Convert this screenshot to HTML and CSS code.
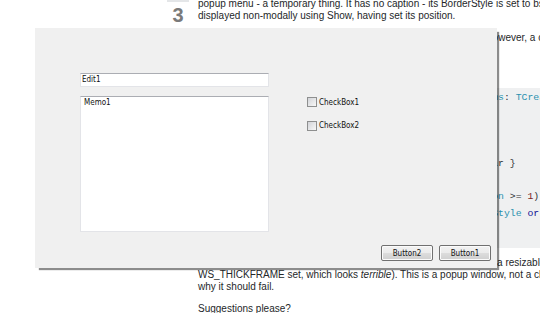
FILE: index.html
```html
<!DOCTYPE html>
<html lang="en">
<head>
    <meta charset="UTF-8">
    <title>Resizable popup form</title>
    <link rel="stylesheet" href="styles.css">
</head>
<body>
    <div class="question">
        <div class="votecell">
            <div class="vote-arrow"></div>
            <div class="vote-count">3</div>
        </div>
        <div class="postcell">
            <p>popup menu - a temporary thing. It has no caption - its BorderStyle is set to bsNone, and it is always
               displayed non-modally using Show, having set its position.</p>
            <p>I want the user to be able to resize it easily by dragging its edge. However, a caption bar then appears,
               which I don't want.</p>
            <p>Here is what I have tried:</p>
            <pre class="code"><span class="kwd">procedure</span> <span class="typ">TfrmPopupMenuForm</span>.<span class="typ">CreateParams</span>(<span class="kwd">var</span> <span class="typ">Params</span>: <span class="typ">TCreateParams</span>);
<span class="kwd">begin</span>
  <span class="kwd">inherited</span> <span class="typ">CreateParams</span>(<span class="typ">Params</span>);
  <span class="typ">Params</span>.<span class="typ">Style</span> := WS_POPUP <span class="kwd">or</span> WS_BORDER;
  { Tried this too, but it still adds a caption bar }
  <span class="com">// Params.Style := WS_SIZEBOX;</span>
  <span class="kwd">if</span> <span class="typ">Assigned</span>(<span class="typ">FOwnerControl</span>) <span class="kwd">and</span> (<span class="typ">Win32MajorVersion</span> &gt;= <span class="lit">1</span>) <span class="kwd">then</span>
   <span class="typ">Params</span>.<span class="typ">Style</span> := WS_OVERLAPPEDWINDOW <span class="kwd">or</span> <span class="typ">Params</span>.<span class="typ">Style</span> <span class="kwd">or</span> WS_THICKFRAME;
<span class="kwd">end</span>;</pre>
            <p>I had expected that setting the window style like this would give me a resizable window (with
               WS_THICKFRAME set, which looks <em>terrible</em>). This is a popup window, not a child window, so I can't see
               why it should fail.</p>
            <p>Suggestions please?</p>
        </div>
    </div>

    <div class="popup">
        <div class="form-body">
            <div class="form-fields">
                <div class="edit">Edit1</div>
                <div class="memo">Memo1</div>
            </div>
            <div class="form-checks">
                <label class="check"><span class="check-box"></span>CheckBox1</label>
                <label class="check"><span class="check-box"></span>CheckBox2</label>
            </div>
        </div>
        <div class="form-buttons">
            <button class="button">Button2</button>
            <button class="button">Button1</button>
        </div>
    </div>
</body>
</html>
```

FILE: styles.css
```css
html, body {
    margin: 0;
    overflow: hidden;
}

body {
    position: relative;
    width: 540px;
    height: 313px;
    background: #fff;
    font-family: "Liberation Sans", Arial, sans-serif;
    font-size: 10px;
    color: #242729;
}

.question {
    display: flex;
    padding-left: 168px;
    margin-top: -2px;
}

.votecell {
    width: 20px;
    margin-right: 10px;
    display: flex;
    flex-direction: column;
    align-items: center;
}

.vote-arrow {
    width: 22px;
    height: 4px;
    background: #e4e6e8;
}

.vote-count {
    margin-top: 3px;
    font-size: 20px;
    font-weight: bold;
    line-height: 20px;
    color: #7a7a7a;
}

.postcell {
    width: 470px;
    flex-shrink: 0;
}

.postcell p {
    margin: 0 0 10px;
    line-height: 12px;
}

.code {
    margin: 0 0 9px;
    padding: 2px 6px 9px;
    background: #eff0f1;
    font-family: "Liberation Mono", "Courier New", monospace;
    font-size: 9.8px;
    line-height: 16.5px;
    color: #303336;
    overflow: hidden;
}

.kwd { color: #101094; }
.typ { color: #2b91af; }
.lit { color: #7d2727; }
.com { color: #858c93; }

/* the popup form lying over the question */
.popup {
    position: absolute;
    left: 35px;
    top: 28px;
    width: 462px;
    height: 240px;
    box-sizing: border-box;
    padding: 45px 6px 7px 45px;
    display: flex;
    flex-direction: column;
    background: #f0f0f0;
    box-shadow: 3px 3px 1px -1px rgba(0,0,0,0.45);
    font-family: "DejaVu Sans Condensed", "DejaVu Sans", sans-serif;
    font-stretch: condensed;
    font-size: 8px;
    color: #111;
}

.form-body {
    display: flex;
}

.form-fields {
    width: 189px;
    display: flex;
    flex-direction: column;
    gap: 9px;
}

.edit,
.memo {
    box-sizing: border-box;
    background: #fff;
    border: 1px solid #e3e4e8;
    border-top-color: #abadb3;
    line-height: 12px;
}

.edit {
    height: 14px;
    padding: 0 1px;
}

.memo {
    height: 136px;
    padding: 0 3px;
}

.form-checks {
    margin-left: 38px;
    padding-top: 24px;
    display: flex;
    flex-direction: column;
    gap: 13.5px;
}

.check {
    display: flex;
    align-items: center;
    gap: 2px;
    height: 10px;
}

.check-box {
    width: 10px;
    height: 10px;
    box-sizing: border-box;
    border: 1px solid #8e8f8f;
    background: linear-gradient(135deg, #d2d4d8, #f7f7f7);
}

.form-buttons {
    margin-top: auto;
    display: flex;
    justify-content: flex-end;
    gap: 6px;
}

.button {
    width: 52px;
    height: 16px;
    box-sizing: border-box;
    padding: 0;
    border: 1px solid #707070;
    border-radius: 2px;
    background: linear-gradient(#f2f2f2 0%, #ebebeb 50%, #dddddd 50%, #cfcfcf 100%);
    box-shadow: inset 0 0 0 1px #fbfbfb;
    font: inherit;
    color: #111;
}
```
